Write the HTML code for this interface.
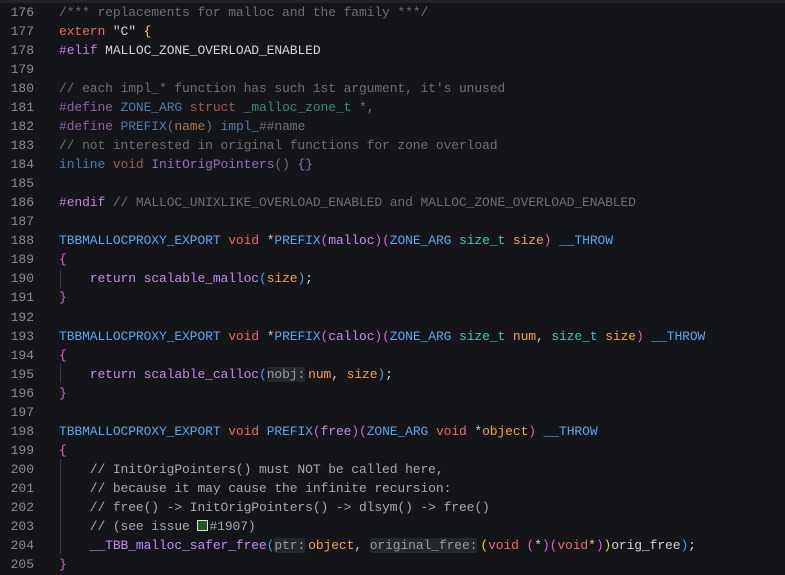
<!DOCTYPE html><html><head><meta charset="utf-8"><style>
body{margin:0;width:785px;height:575px;background:#141518;overflow:hidden;font-family:"Liberation Mono",monospace;font-size:13px;}
.top{position:absolute;left:0;top:0;width:785px;height:3px;background:#222327}
.g{position:absolute;left:0;top:3px;width:34px;text-align:right;color:#8a8c90;line-height:19.03px;white-space:pre}
.c{position:absolute;left:59px;top:3px;line-height:19.03px;white-space:pre;color:#d4d4d4;letter-spacing:-0.11px}
.ig{position:absolute;left:60px;width:1px;background:#3a3c40}
.k{color:#f06a64}.m{color:#5aa6f0}.t{color:#3ccab4}.p{color:#f5a546}.f{color:#c68cf5}.cm{color:#a8a8a8}.pp{color:#c080e0}
.dc{color:#6c6e72}.dk{color:#9c5a58}.dm{color:#4f7ca8}.dt{color:#3a8a7e}.dp{color:#a87a48}.df{color:#9470b8}.dpp{color:#9060a8}
.y{color:#f5d030}.pk{color:#e060c8}.b{color:#3aa0f0}
.h{background:#24272b;color:#9a9ca0;border-radius:2px;margin-right:3px}
.sq{display:inline-block;width:9px;height:9px;border:1px solid #ddd;background:#1e5a1e;vertical-align:-1px;margin-right:1px}
</style></head><body><div class="top"></div>
<div class="ig" style="top:269px;height:19px"></div>
<div class="ig" style="top:364px;height:19px"></div>
<div class="ig" style="top:459px;height:95px"></div>
<div class="g">176
177
178
179
180
181
182
183
184
185
186
187
188
189
190
191
192
193
194
195
196
197
198
199
200
201
202
203
204
205</div>
<div class="c"><span class="dc">/*** replacements for malloc and the family ***/</span>
<span class="k">extern</span> <span>"C"</span> <span class="y">{</span>
<span class="pp">#elif</span> MALLOC_ZONE_OVERLOAD_ENABLED

<span class="dc">// each impl_* function has such 1st argument, it's unused</span>
<span class="dpp">#define</span> <span class="dm">ZONE_ARG</span> <span class="dk">struct</span> <span class="dt">_malloc_zone_t</span> <span class="dc">*,</span>
<span class="dpp">#define</span> <span class="dm">PREFIX</span><span class="dc">(</span><span class="dp">name</span><span class="dc">)</span> <span class="dm">impl_</span><span class="dc">##name</span>
<span class="dc">// not interested in original functions for zone overload</span>
<span class="dm">inline</span> <span class="dk">void</span> <span class="df">InitOrigPointers</span><span class="dc">() </span><span class="df">{}</span>

<span class="pp">#endif</span> <span class="dc">// MALLOC_UNIXLIKE_OVERLOAD_ENABLED and MALLOC_ZONE_OVERLOAD_ENABLED</span>

<span class="m">TBBMALLOCPROXY_EXPORT</span> <span class="k">void</span> *<span class="m">PREFIX</span><span class="pk">(</span><span class="f">malloc</span><span class="pk">)(</span><span class="m">ZONE_ARG</span> <span class="t">size_t</span> <span class="p">size</span><span class="pk">)</span> <span class="m">__THROW</span>
<span class="pk">{</span>
    <span class="f">return</span> <span class="f">scalable_malloc</span><span class="b">(</span><span class="p">size</span><span class="b">)</span>;
<span class="pk">}</span>

<span class="m">TBBMALLOCPROXY_EXPORT</span> <span class="k">void</span> *<span class="m">PREFIX</span><span class="pk">(</span><span class="f">calloc</span><span class="pk">)(</span><span class="m">ZONE_ARG</span> <span class="t">size_t</span> <span class="p">num</span>, <span class="t">size_t</span> <span class="p">size</span><span class="pk">)</span> <span class="m">__THROW</span>
<span class="pk">{</span>
    <span class="f">return</span> <span class="f">scalable_calloc</span><span class="b">(</span><span class="h">nobj:</span><span class="p">num</span>, <span class="p">size</span><span class="b">)</span>;
<span class="pk">}</span>

<span class="m">TBBMALLOCPROXY_EXPORT</span> <span class="k">void</span> <span class="m">PREFIX</span><span class="pk">(</span><span class="f">free</span><span class="pk">)(</span><span class="m">ZONE_ARG</span> <span class="k">void</span> *<span class="p">object</span><span class="pk">)</span> <span class="m">__THROW</span>
<span class="pk">{</span>
    <span class="cm">// InitOrigPointers() must NOT be called here,</span>
    <span class="cm">// because it may cause the infinite recursion:</span>
    <span class="cm">// free() -&gt; InitOrigPointers() -&gt; dlsym() -&gt; free()</span>
    <span class="cm">// (see issue <span class="sq"></span>#1907)</span>
    <span class="f">__TBB_malloc_safer_free</span><span class="b">(</span><span class="h">ptr:</span><span class="p">object</span>, <span class="h">original_free:</span><span class="y">(</span><span class="k">void</span> <span class="pk">(</span>*<span class="pk">)(</span><span class="k">void</span>*<span class="pk">)</span><span class="y">)</span>orig_free<span class="b">)</span>;
<span class="pk">}</span></div>
</body></html>
